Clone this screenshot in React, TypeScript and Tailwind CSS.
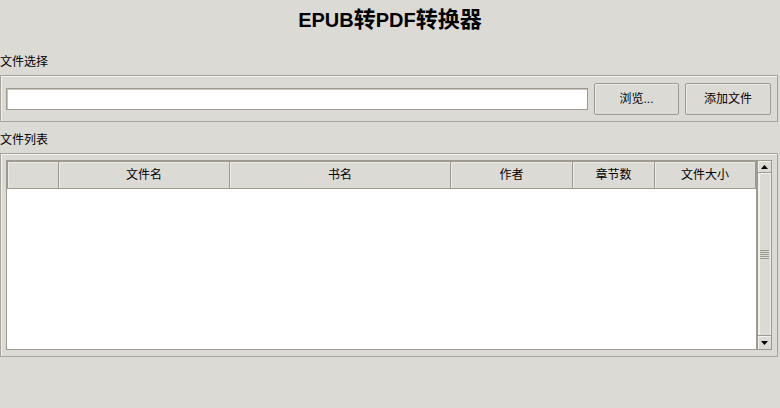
const columns = [
    { label: '', width: 51 },
    { label: '文件名', width: 171 },
    { label: '书名', width: 221 },
    { label: '作者', width: 122 },
    { label: '章节数', width: 82 },
    { label: '文件大小', width: 101 },
]

const font = "font-['Liberation_Sans','Noto_Sans_CJK_SC',sans-serif]"

const Arrow = ({ up }: { up?: boolean }) => (
    <svg width="7" height="4" viewBox="0 0 7 4">
        <path d={up ? 'M0 4 L3.5 0 L7 4 Z' : 'M0 0 L7 0 L3.5 4 Z'} fill="#000" />
    </svg>
)

const ScrollBar = () => {
    return (
        <div className="flex w-[15px] flex-col border border-[#9e9a91] bg-[#dcdad5]">
            <div className="flex h-[12px] items-center justify-center border-b border-[#9e9a91] bg-[#dcdad5] shadow-[inset_1px_1px_0_#f4f2ef]">
                <Arrow up />
            </div>
            <div className="flex flex-1 items-center justify-center border-x border-[#eeebe7] bg-[#dcdad5] shadow-[inset_1px_1px_0_#f4f2ef]">
                <div className="flex w-[9px] flex-col gap-[1px]">
                    {[0, 1, 2, 3, 4].map((i) => (
                        <div key={i} className="h-px bg-[#9e9a91]" />
                    ))}
                </div>
            </div>
            <div className="flex h-[14px] items-center justify-center border-t border-[#9e9a91] bg-[#dcdad5] shadow-[inset_1px_1px_0_#f4f2ef]">
                <Arrow />
            </div>
        </div>
    )
}

const Button = ({ label, width }: { label: string; width: string }) => (
    <button
        className={`${width} h-[32px] rounded-[2px] border border-[#9e9a91] bg-[#dcdad5] text-[12px] text-black shadow-[inset_1px_1px_0_#eeebe7]`}
    >
        {label}
    </button>
)

export default function App() {
    return (
        <div className={`${font} flex h-[408px] w-[780px] flex-col bg-[#dcdad5] text-black`}>
            <div className="flex h-[40px] items-center justify-center">
                <h1 className="text-[20px] font-bold leading-none">
                    EPUB<span className="text-[22px]">转</span>PDF<span className="text-[22px]">转换器</span>
                </h1>
            </div>

            <div className="mt-[14px] h-[16px] text-[12px] leading-[16px]">文件选择</div>
            <div className="mt-[5px] mr-[2px] flex h-[47px] items-center gap-[6px] border border-[#a8a49c] pl-[5px] pr-[6px] shadow-[inset_1px_1px_0_#f4f2ef]">
                <div className="h-[22px] flex-1 border border-[#9e9a91] bg-white shadow-[inset_1px_1px_0_#c8c5bf]" />
                <Button label="浏览..." width="w-[85px]" />
                <Button label="添加文件" width="w-[86px]" />
            </div>

            <div className="mt-[10px] h-[16px] text-[12px] leading-[16px]">文件列表</div>
            <div className="mt-[5px] mr-[2px] flex h-[204px] border border-[#a8a49c] px-[5px] py-[6px] shadow-[inset_1px_1px_0_#f4f2ef]">
                <div className="flex flex-1 flex-col border border-[#9e9a91] bg-white">
                    <div className="flex h-[28px] border-t border-l border-[#9e9a91] bg-[#dcdad5]">
                        {columns.map((c, i) => (
                            <div
                                key={i}
                                style={{ width: c.width }}
                                className="flex items-center justify-center border-r border-b border-[#9e9a91] text-[12px] shadow-[inset_1px_1px_0_#eeebe7]"
                            >
                                {c.label}
                            </div>
                        ))}
                    </div>
                </div>
                <ScrollBar />
            </div>
        </div>
    )
}
